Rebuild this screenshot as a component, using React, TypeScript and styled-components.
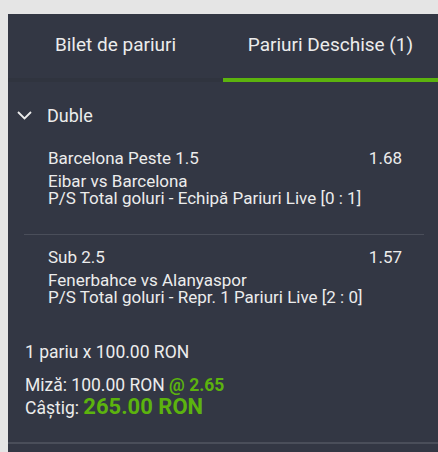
import React from "react";
import styled, { createGlobalStyle } from "styled-components";

const Global = createGlobalStyle`
  html, body { margin: 0; padding: 0; background: #e5e5e5; }
  body { font-family: Roboto, "Noto Sans", sans-serif; overflow: hidden; }
`;

const Page = styled.div`
  padding: 14px 0 0 8px;
  height: 452px;
  box-sizing: border-box;
`;

const Panel = styled.div`
  background: #333744;
  height: 100%;
  color: #ececec;
  display: flex;
  flex-direction: column;
`;

const Tabs = styled.div`
  display: grid;
  grid-template-columns: 1fr 1fr;
  height: 68px;
`;

const Tab = styled.div<{ $active?: boolean }>`
  display: flex;
  align-items: center;
  justify-content: center;
  font-size: 19px;
  padding-bottom: 4px;
  box-sizing: border-box;
  border-bottom: 4px solid ${(p) => (p.$active ? "#5cb30e" : "#30343f")};
`;

const Content = styled.div`
  flex: 1;
  display: flex;
  flex-direction: column;
`;

const GroupHeader = styled.div`
  display: flex;
  align-items: center;
  gap: 15px;
  padding: 20px 0 0 9px;
  font-size: 18px;
  height: 27px;
`;

const Selections = styled.div`
  padding: 18px 14px 0 16px;
`;

const Selection = styled.div<{ $last?: boolean }>`
  padding: 0 22px ${(p) => (p.$last ? "0" : "27px")} 24px;
  margin-bottom: ${(p) => (p.$last ? "0" : "11px")};
  border-bottom: ${(p) => (p.$last ? "none" : "1px solid #4a4e5a")};
  font-size: 17px;
`;

const Row = styled.div`
  display: flex;
  justify-content: space-between;
  line-height: 22px;
  margin-bottom: 4px;
`;

const Line = styled.div`
  line-height: 17px;
`;

const Summary = styled.div`
  padding: 36px 0 0 17px;
  font-size: 17.5px;
`;

const Bets = styled.div`
  line-height: 20px;
  margin-bottom: 13px;
`;

const Stake = styled.div`
  line-height: 21px;
`;

const Green = styled.span<{ $big?: boolean }>`
  color: #5cb30e;
  font-weight: 700;
  line-height: 1;
  font-size: ${(p) => (p.$big ? "22px" : "17.5px")};
`;

const Footer = styled.div`
  margin-top: auto;
  margin-bottom: 8px;
  height: 2px;
  background: #4a4e5a;
`;

const Chevron = () => (
  <svg width="15" height="9" viewBox="0 0 15 9" fill="none">
    <path d="M1 1 L7.5 7.5 L14 1" stroke="#ececec" strokeWidth="1.8" />
  </svg>
);

export default function App() {
  return (
    <>
      <Global />
      <Page>
        <Panel>
          <Tabs>
            <Tab>Bilet de pariuri</Tab>
            <Tab $active>Pariuri Deschise (1)</Tab>
          </Tabs>
          <Content>
            <GroupHeader>
              <Chevron />
              <span>Duble</span>
            </GroupHeader>
            <Selections>
              <Selection>
                <Row>
                  <span>Barcelona Peste 1.5</span>
                  <span>1.68</span>
                </Row>
                <Line>Eibar vs Barcelona</Line>
                <Line>P/S Total goluri - Echipă Pariuri Live [0 : 1]</Line>
              </Selection>
              <Selection $last>
                <Row>
                  <span>Sub 2.5</span>
                  <span>1.57</span>
                </Row>
                <Line>Fenerbahce vs Alanyaspor</Line>
                <Line>P/S Total goluri - Repr. 1 Pariuri Live [2 : 0]</Line>
              </Selection>
            </Selections>
            <Summary>
              <Bets>1 pariu x 100.00 RON</Bets>
              <Stake>
                Miză: 100.00 RON <Green>@ 2.65</Green>
              </Stake>
              <Stake>
                Câștig: <Green $big>265.00 RON</Green>
              </Stake>
            </Summary>
            <Footer />
          </Content>
        </Panel>
      </Page>
    </>
  );
}
